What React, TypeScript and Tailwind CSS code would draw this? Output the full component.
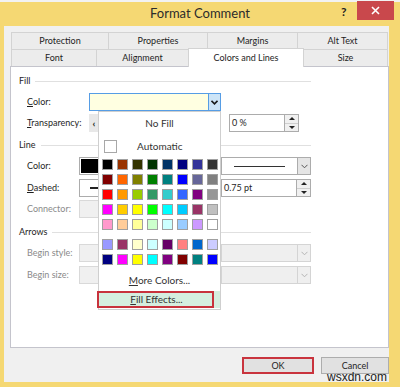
import React from 'react'

const PALETTE = [
  ['#000000', '#993300', '#333300', '#003300', '#003366', '#000080', '#333399', '#333333'],
  ['#800000', '#FF6600', '#808000', '#008000', '#008080', '#0000FF', '#666699', '#808080'],
  ['#FF0000', '#FF9900', '#99CC00', '#339966', '#33CCCC', '#3366FF', '#800080', '#969696'],
  ['#FF00FF', '#FFCC00', '#FFFF00', '#00FF00', '#00FFFF', '#00CCFF', '#993366', '#C0C0C0'],
  ['#FF99CC', '#FFCC99', '#FFFF99', '#CCFFCC', '#CCFFFF', '#99CCFF', '#CC99FF', '#FFFFFF'],
]

const CHART = [
  ['#9999FF', '#993366', '#FFFFCC', '#CCFFFF', '#660066', '#FF8080', '#0066CC', '#CCCCFF'],
  ['#000080', '#FF00FF', '#FFFF00', '#00FFFF', '#800080', '#800000', '#008080', '#0000FF'],
]

function Chevron({ color = '#333', bold = false }: { color?: string; bold?: boolean }) {
  return (
    <svg width="7" height="5" viewBox="0 0 7 5">
      <polyline points="0.5,0.8 3.5,3.8 6.5,0.8" fill="none" stroke={color} strokeWidth={bold ? 1.6 : 1} />
    </svg>
  )
}

function Spin() {
  return (
    <div className="flex h-[18px] w-[14px] flex-col border border-l-0 border-[#acacac] bg-[#f0f0f0]">
      <div className="flex flex-1 items-center justify-center border-b border-[#cfcfcf]">
        <svg width="6" height="3" viewBox="0 0 6 3">
          <polygon points="0,3 3,0 6,3" fill="#222" />
        </svg>
      </div>
      <div className="flex flex-1 items-center justify-center">
        <svg width="6" height="3" viewBox="0 0 6 3">
          <polygon points="0,0 6,0 3,3" fill="#222" />
        </svg>
      </div>
    </div>
  )
}

function Header({ label, className }: { label: string; className: string }) {
  return (
    <div className={`flex h-[14px] w-[292px] items-center ${className}`}>
      <span>{label}</span>
      <div className="ml-[5px] h-px flex-1 bg-[#e0e0e0]" />
    </div>
  )
}

function DisabledSelect() {
  return (
    <div className="flex h-[18px] w-[90px] border border-[#d4d4d4] bg-[#efefef]">
      <div className="flex-1" />
      <div className="flex w-[13px] items-center justify-center border-l border-[#d4d4d4]">
        <Chevron color="#b5b5b5" />
      </div>
    </div>
  )
}

function Tab({ label, w, last }: { label: string; w: string; last?: boolean }) {
  return (
    <div className={`flex h-[17px] items-center justify-center border-l border-t border-[#d3d3d3] bg-[#ececec] ${w} ${last ? 'border-r' : ''}`}>
      {label}
    </div>
  )
}

export default function App() {
  return (
    <div
      className="relative flex h-[387px] w-[400px] flex-col overflow-hidden bg-[#f5d873] text-[9px] text-[#1e1e1e]"
      style={{ fontFamily: 'Lato, "Noto Sans", sans-serif' }}
    >
      <div className="h-[2px] bg-[#f2f2f2]" />
      {/* title bar */}
      <div className="flex h-[24px] items-center justify-center text-[13px] text-[#2b2b2b]">Format Comment</div>
      <span className="absolute left-[341px] top-[3px] text-[12px] font-bold text-[#222]">?</span>
      <div className="absolute right-[6px] top-[1px] flex h-[19px] w-[37px] items-center justify-center bg-[#c9484c]">
        <svg width="9" height="9" viewBox="0 0 9 9">
          <path d="M1 1 L8 8 M8 1 L1 8" stroke="#fff" strokeWidth="1.6" />
        </svg>
      </div>

      {/* body */}
      <div className="mb-[5px] ml-[4px] mr-[11px] flex flex-1 flex-col bg-[#f0f0f0] pl-[6px] pt-[6px]">
        {/* tabs */}
        <div className="ml-[1px] flex">
          <Tab label="Protection" w="w-[97px]" />
          <Tab label="Properties" w="w-[99px]" />
          <Tab label="Margins" w="w-[90px]" />
          <Tab label="Alt Text" w="w-[91px]" last />
        </div>
        <div className="ml-[1px] flex h-[17px] items-end">
          <Tab label="Font" w="w-[85px]" />
          <Tab label="Alignment" w="w-[92px]" />
          <div className="relative z-10 -mb-px flex h-[19px] w-[116px] items-center justify-center border-x border-t border-[#d3d3d3] bg-white">
            Colors and Lines
          </div>
          <div className="flex h-[17px] w-[84px] items-center justify-center border-r border-t border-[#d3d3d3] bg-[#ececec]">
            Size
          </div>
        </div>

        {/* panel */}
        <div className="relative flex h-[282px] w-[379px] flex-col border border-[#c4c4cc] bg-white pl-[8px] pt-[7px]">
          <Header label="Fill" className="" />
          <div className="mt-[5px] flex h-[18px] items-center pl-[8px]">
            <span className="w-[62px]">
              <u className="underline-offset-1">C</u>olor:
            </span>
            <div className="h-[18px] w-[120px] border border-[#569de5] bg-[#ffffe1]" />
            <div className="flex h-[18px] w-[12px] items-center justify-center border border-l-0 border-[#569de5] bg-[#cce4f7]">
              <Chevron color="#1a1a1a" bold />
            </div>
          </div>
          <div className="mt-[3px] flex h-[18px] items-center pl-[8px]">
            <span className="w-[62px]">
              <u className="underline-offset-1">T</u>ransparency:
            </span>
            <div className="flex h-[18px] w-[131px]">
              <div className="flex w-[10px] items-center justify-center bg-[#e8e8e8] text-[10px] font-bold">‹</div>
            </div>
            <div className="ml-[9px] flex h-[18px] w-[56px] items-center border border-[#acacac] px-[2px]">0 %</div>
            <Spin />
          </div>

          <Header label="Line" className="mt-[6px]" />
          <div className="mt-[5px] flex h-[18px] items-center pl-[8px]">
            <span className="w-[52px]">Color:</span>
            <div className="h-[18px] w-[70px] border border-[#acacac] p-px">
              <div className="h-full w-[60px] bg-black" />
            </div>
            <div className="w-[72px]" />
            <div className="flex h-[18px] w-[77px] items-center justify-center border border-[#acacac]">
              <div className="h-px w-[51px] bg-[#333]" />
            </div>
            <div className="flex h-[18px] w-[13px] items-center justify-center border border-l-0 border-[#acacac] bg-[#e5e5e5]">
              <Chevron color="#555" />
            </div>
          </div>
          <div className="mt-[4px] flex h-[18px] items-center pl-[8px]">
            <span className="w-[52px]">
              <u className="underline-offset-1">D</u>ashed:
            </span>
            <div className="flex h-[18px] w-[70px] items-center border border-[#acacac] pl-[10px]">
              <div className="h-[1.5px] w-[40px] bg-[#222]" />
            </div>
            <div className="w-[72px]" />
            <div className="flex h-[18px] w-[76px] items-center border border-[#acacac] px-[2px]">0.75 pt</div>
            <Spin />
          </div>
          <div className="mt-[3px] flex h-[18px] items-center pl-[8px] text-[#8a8a8a]">
            <span className="w-[52px]">Connector:</span>
            <div className="h-[18px] w-[70px] border border-[#d9d9d9] bg-[#f0f0f0]" />
          </div>

          <Header label="Arrows" className="mt-[7px]" />
          <div className="mt-[5px] flex h-[18px] items-center pl-[8px] text-[#8a8a8a]">
            <span className="w-[52px]">Begin style:</span>
            <div className="h-[18px] w-[70px] border border-[#d9d9d9] bg-[#f0f0f0]" />
            <div className="w-[72px]" />
            <DisabledSelect />
          </div>
          <div className="mt-[4px] flex h-[18px] items-center pl-[8px] text-[#8a8a8a]">
            <span className="w-[52px]">Begin size:</span>
            <div className="h-[18px] w-[70px] border border-[#d9d9d9] bg-[#f0f0f0]" />
            <div className="w-[72px]" />
            <DisabledSelect />
          </div>

          {/* colour drop-down menu */}
          <div className="absolute left-[87px] top-[44px] z-20 flex h-[199px] w-[123px] flex-col border border-[#cfcfcf] bg-white">
            <div className="flex h-[23px] items-center justify-center text-[10px] text-[#333]">No Fill</div>
            <div className="flex h-[22px] items-center pl-[5px] text-[10px] text-[#333]">
              <div className="h-[13px] w-[13px] border border-[#a8a8a8]" />
              <span className="ml-[20px]">Automatic</span>
            </div>
            <div className="mt-[2px] flex flex-col gap-[4px] pl-[3px]">
              {PALETTE.map((row, i) => (
                <div key={i} className="flex gap-[4px]">
                  {row.map((c) => (
                    <div key={c} className="h-[11px] w-[11px] border border-[#a0a0a0]" style={{ backgroundColor: c }} />
                  ))}
                </div>
              ))}
            </div>
            <div className="mt-[9px] flex flex-col gap-[4px] pl-[3px]">
              {CHART.map((row, i) => (
                <div key={i} className="flex gap-[4px]">
                  {row.map((c, j) => (
                    <div key={j} className="h-[11px] w-[11px] border border-[#a0a0a0]" style={{ backgroundColor: c }} />
                  ))}
                </div>
              ))}
            </div>
            <div className="mt-[5px] flex h-[20px] items-center justify-center text-[10px] text-[#333]">
              <span>
                <u className="underline-offset-1">M</u>ore Colors...
              </span>
            </div>
            <div className="relative mt-[1px] flex h-[17px] items-center justify-center bg-[#d5eedf] text-[10px] text-[#333]">
              <span className="-ml-[6px]">
                <u className="underline-offset-1">F</u>ill Effects...
              </span>
              <div className="absolute -left-[2px] top-0 h-[17px] w-[117px] border-2 border-[#c8323c]" />
            </div>
          </div>
        </div>

        {/* buttons */}
        <div className="mt-[9px] flex justify-end gap-[7px]">
          <div className="flex h-[17px] w-[72px] items-center justify-center border-2 border-[#c9343e] bg-[#e1e1e1]">OK</div>
          <div className="flex h-[17px] w-[68px] items-center justify-center border border-[#adadad] bg-[#e1e1e1]">Cancel</div>
        </div>
      </div>

      <span
        className="absolute left-[327px] top-[368px] text-[12px] text-[#222]"
        style={{ fontFamily: '"Liberation Sans", sans-serif' }}
      >
        wsxdn.com
      </span>
    </div>
  )
}
